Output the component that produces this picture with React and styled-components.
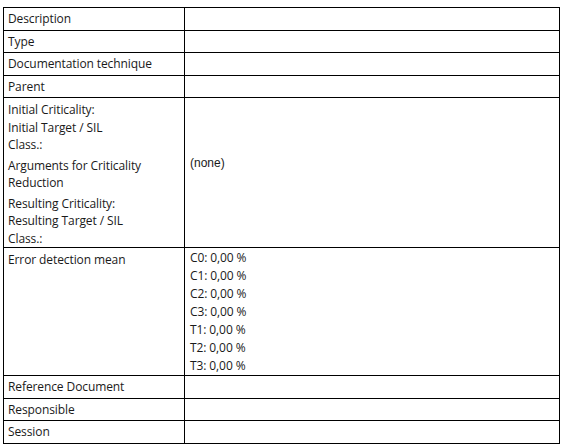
import React from "react";
import styled, { createGlobalStyle } from "styled-components";

const Global = createGlobalStyle`
  html, body { margin: 0; padding: 0; background: #fff; }
  body { font-family: "Open Sans", "Noto Sans", sans-serif; color: #1a1a1a; }
`;

const Page = styled.div`
  padding: 7px 2px 0 3px;
`;

const Table = styled.table`
  width: 557px;
  border-collapse: collapse;
  table-layout: fixed;
  font-size: 12px;
`;

const Label = styled.td`
  width: 171px;
  border: 1px solid #000;
  padding: ${(p) => (p.$tall ? "3px 5px 0 4px" : "0 5px 0 4px")};
  height: ${(p) => (p.$tall ? "auto" : "21.5px")};
  vertical-align: ${(p) => (p.$tall ? "top" : "middle")};
  line-height: 17.5px;
  white-space: nowrap;
  letter-spacing: -0.1px;
`;

const Value = styled.td`
  border: 1px solid #000;
  padding: 0 5px;
  vertical-align: top;
  line-height: 17.5px;
  letter-spacing: -0.1px;
`;

const ListValue = styled(Value)`
  padding: 1px 5px 0;
  line-height: 18px;
`;

const NoneValue = styled(Value)`
  padding: 57px 5px 0;
  font-family: "Liberation Sans", Arial, sans-serif;
  letter-spacing: 0;
`;

const Para = styled.div`
  & + & { margin-top: 3px; }
`;

const Line = styled.div``;

const simple = ["Description", "Type", "Documentation technique", "Parent"];
const bottom = ["Reference Document", "Responsible", "Session"];
const errors = ["C0", "C1", "C2", "C3", "T1", "T2", "T3"];

export default function App() {
  return (
    <Page>
      <Global />
      <Table>
        <tbody>
          {simple.map((s) => (
            <tr key={s}>
              <Label>{s}</Label>
              <Value />
            </tr>
          ))}
          <tr>
            <Label $tall>
              <Para>
                <Line>Initial Criticality:</Line>
                <Line>Initial Target / SIL</Line>
                <Line>Class.:</Line>
              </Para>
              <Para>
                <Line>Arguments for Criticality</Line>
                <Line>Reduction</Line>
              </Para>
              <Para>
                <Line>Resulting Criticality:</Line>
                <Line>Resulting Target / SIL</Line>
                <Line>Class.:</Line>
              </Para>
            </Label>
            <NoneValue>(none)</NoneValue>
          </tr>
          <tr>
            <Label $tall>Error detection mean</Label>
            <ListValue>
              {errors.map((e) => (
                <Line key={e}>{e}: 0,00 %</Line>
              ))}
            </ListValue>
          </tr>
          {bottom.map((s) => (
            <tr key={s}>
              <Label>{s}</Label>
              <Value />
            </tr>
          ))}
        </tbody>
      </Table>
    </Page>
  );
}
